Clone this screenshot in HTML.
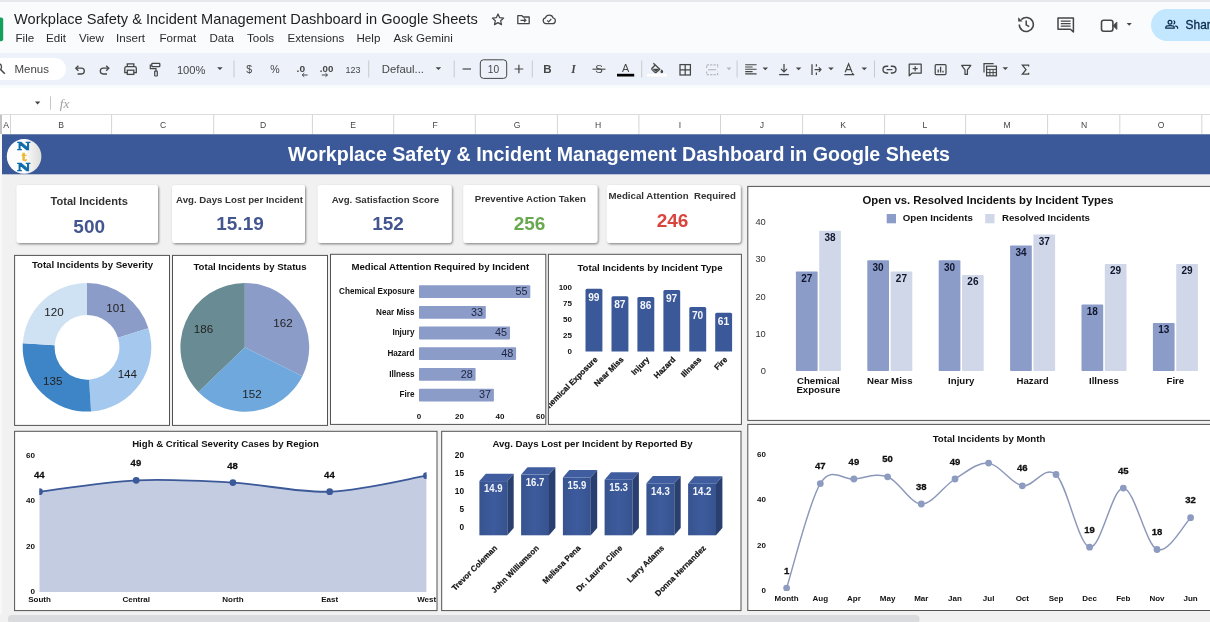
<!DOCTYPE html>
<html lang="en"><head><meta charset="utf-8"><title>Workplace Safety &amp; Incident Management Dashboard in Google Sheets</title>
<style>
html,body{margin:0;padding:0}
body{width:1210px;height:622px;overflow:hidden;position:relative;background:#f9fbfd;font-family:"Liberation Sans",Arial,sans-serif;color:#1f1f1f}
.abs{position:absolute}
#topline{left:0;top:0;width:1210px;height:1.5px;background:#e6e8ec}
#doctitle{left:14px;top:9px;font-size:14.6px;line-height:20px;white-space:nowrap;color:#1f1f1f}
#menubar span{position:absolute;top:30px;line-height:16px;font-size:11.6px;color:#2a2a2a;white-space:nowrap}
#toolbar{left:0;top:53px;width:1210px;height:32px;background:#edf1f9}
#menus{left:-12px;top:58px;width:78px;height:22px;border-radius:11px;background:#fff}
#menus span{position:absolute;left:26.5px;top:4px;font-size:11.5px;line-height:14px;color:#444}
#fbar{left:0;top:88px;width:1210px;height:26px;background:#fff}
#sheet{left:0;top:134px;width:1210px;height:488px;background:#f1f1f1}
#share{left:1150.7px;top:8.5px;width:80px;height:32px;border-radius:16px;background:#c2e7ff}
#share span{position:absolute;left:34.6px;top:9.2px;font-size:11.9px;line-height:14px;color:#0b2a4a;-webkit-text-stroke:0.3px #0b2a4a}
svg{position:absolute;left:0;top:0;will-change:transform}
#doctitle,#menubar,#menus,#share{will-change:transform}
svg text{font-family:"Liberation Sans",Arial,sans-serif}
</style></head>
<body>
<div id="topline" class="abs"></div>
<div id="doctitle" class="abs">Workplace Safety &amp; Incident Management Dashboard in Google Sheets</div>
<div id="menubar">
<span style="left:15.5px">File</span><span style="left:46px">Edit</span><span style="left:79px">View</span><span style="left:116px">Insert</span><span style="left:159.5px">Format</span><span style="left:209.5px">Data</span><span style="left:247px">Tools</span><span style="left:287.5px">Extensions</span><span style="left:356.5px">Help</span><span style="left:393.5px">Ask Gemini</span>
</div>
<div id="toolbar" class="abs"></div>
<div id="menus" class="abs"><span>Menus</span></div>
<div id="share" class="abs"><span>Share</span></div>
<div id="fbar" class="abs"></div>
<div id="sheet" class="abs"></div>
<svg id="chrome" width="1210" height="622" viewBox="0 0 1210 622">
<path d="M-6,17.4 H1.2 Q3.2,17.4 3.2,19.4 V39.2 Q3.2,41.2 1.2,41.2 H-6 Z" fill="#12a05c"/>
<path d="M498,14.6 L499.7,18.3 L503.6,18.7 L500.7,21.4 L501.5,25.2 L498,23.2 L494.5,25.2 L495.3,21.4 L492.4,18.7 L496.3,18.3 Z" fill="none" stroke="#444746" stroke-width="1.25" stroke-linejoin="round" transform="translate(0,-0.6)"/>
<path d="M517.8,15.7 H522 L523.3,17 H529.2 V23.6 H517.8 Z" fill="none" stroke="#444746" stroke-width="1.3" stroke-linejoin="round"/><path d="M520.5,20.3 H525.6 M524,18.4 L525.9,20.3 L524,22.2" fill="none" stroke="#444746" stroke-width="1.2"/>
<path d="M546,23.7 H552.6 A2.9,2.9 0 0 0 553.2,18 A4.1,4.1 0 0 0 545.4,17.9 A2.95,2.95 0 0 0 546,23.7 Z" fill="none" stroke="#444746" stroke-width="1.25"/><path d="M547.2,20.4 L548.6,21.8 L551.3,19" fill="none" stroke="#444746" stroke-width="1.2"/>
<path d="M1019.3,24.5 A7,7 0 1 0 1021.3,19.6" fill="none" stroke="#444746" stroke-width="1.6"/><path d="M1018.2,17.2 V21.6 H1022.6 Z" fill="#444746"/><path d="M1026.2,20.5 V24.8 L1029.2,26.6" fill="none" stroke="#444746" stroke-width="1.5"/>
<path d="M1058,18 H1073.4 V32 L1070.4,29.2 H1058 Z" fill="none" stroke="#444746" stroke-width="1.5" stroke-linejoin="round"/><path d="M1060.8,21.1 H1070.6 M1060.8,23.6 H1070.6 M1060.8,26.1 H1070.6" stroke="#444746" stroke-width="1.3"/>
<rect x="1101.5" y="20.2" width="11.4" height="11" rx="2.2" fill="none" stroke="#444746" stroke-width="1.6"/><path d="M1112.9,25.7 L1116.9,22 V29.4 Z" fill="#444746" stroke="#444746" stroke-width="0.8" stroke-linejoin="round"/>
<path d="M1126.6,22.9 h5.2 l-2.6,2.8 Z" fill="#444746"/>
<circle cx="1170" cy="22.3" r="1.9" fill="none" stroke="#0b2a4a" stroke-width="1.25"/><path d="M1165.8,28.2 V27.3 Q1165.8,25.6 1170,25.6 Q1174.2,25.6 1174.2,27.3 V28.2 Z" fill="none" stroke="#0b2a4a" stroke-width="1.25"/><path d="M1173.5,20.5 A1.9,1.9 0 0 1 1173.5,24.1 M1175.2,25.9 Q1177.6,26.3 1177.6,27.6 V28.8" fill="none" stroke="#0b2a4a" stroke-width="1.25"/>
<circle cx="-1.8" cy="66.9" r="3.3" fill="none" stroke="#444746" stroke-width="1.3"/><path d="M0.6,69.4 L4.8,73.8" stroke="#444746" stroke-width="1.5" fill="none"/>
<path d="M77.6,74 H81.4 A2.9,2.9 0 0 0 81.4,68.2 H76" fill="none" stroke="#444746" stroke-width="1.3"/><path d="M78.4,65.7 L75.8,68.2 L78.4,70.7" fill="none" stroke="#444746" stroke-width="1.3"/>
<path d="M107,74 H103.2 A2.9,2.9 0 0 1 103.2,68.2 H108.6" fill="none" stroke="#444746" stroke-width="1.3"/><path d="M106.2,65.7 L108.8,68.2 L106.2,70.7" fill="none" stroke="#444746" stroke-width="1.3"/>
<path d="M127.3,66.6 V63.9 H133.8 V66.6" fill="none" stroke="#444746" stroke-width="1.3"/><path d="M127.2,72.6 H124.8 V68.2 Q124.8,66.7 126.3,66.7 H134.8 Q136.3,66.7 136.3,68.2 V72.6 H133.9" fill="none" stroke="#444746" stroke-width="1.3"/><rect x="127.3" y="70.2" width="6.5" height="4.2" fill="none" stroke="#444746" stroke-width="1.3"/>
<rect x="151.8" y="63.4" width="8" height="3.2" rx="0.6" fill="none" stroke="#444746" stroke-width="1.3"/><path d="M151.8,65 H150.3 V68.6 H156 V71" fill="none" stroke="#444746" stroke-width="1.2"/><rect x="154.7" y="71.2" width="2.6" height="4.8" rx="0.5" fill="none" stroke="#444746" stroke-width="1.2"/>
<path d="M217.1,67.2 h5.6 l-2.8,2.8 Z" fill="#444746"/>
<rect x="233.5" y="60.5" width="1" height="17.0" fill="#c7cad1"/>
<path d="M302.2,75 H307.6 M304.2,73.2 L302.2,75 L304.2,76.8" fill="none" stroke="#444746" stroke-width="1"/>
<path d="M321.8,75 H327.4 M325.5,73.2 L327.5,75 L325.5,76.8" fill="none" stroke="#444746" stroke-width="1"/>
<rect x="368.2" y="60.5" width="1" height="17.0" fill="#c7cad1"/>
<path d="M435.6,67.2 h5.6 l-2.8,2.8 Z" fill="#444746"/>
<rect x="453.7" y="60.5" width="1" height="17.0" fill="#c7cad1"/>
<path d="M462.6,69 H471" stroke="#444746" stroke-width="1.2"/>
<rect x="480.3" y="59.8" width="26.4" height="18.6" rx="3.2" fill="none" stroke="#444746" stroke-width="1"/>
<path d="M514.6,69 H523.2 M518.9,64.7 V73.3" stroke="#444746" stroke-width="1.2"/>
<rect x="531.8" y="60.5" width="1" height="17.0" fill="#c7cad1"/>
<path d="M592.5,69.2 H605.5" stroke="#444746" stroke-width="1.1"/>
<rect x="617" y="73.8" width="17.2" height="2.7" fill="#000"/>
<rect x="641.2" y="60.5" width="1" height="17.0" fill="#c7cad1"/>
<path d="M653.4,63.2 L659.8,69.2 L656.3,72.4 Q655.6,72.9 654.9,72.4 L652,69.6 Q651.5,68.9 652,68.2 L655.2,65" fill="none" stroke="#444746" stroke-width="1.25" stroke-linejoin="round"/><path d="M652.4,68.8 H659.4 L656,72 Z" fill="#444746"/><path d="M661.8,69.2 Q663.2,71 663.2,71.8 A1.4,1.4 0 0 1 660.4,71.8 Q660.4,71 661.8,69.2 Z" fill="#444746"/>
<rect x="647" y="73.8" width="20" height="2.7" fill="#fff"/>
<rect x="680" y="64.6" width="10.4" height="10.4" fill="none" stroke="#444746" stroke-width="1.25"/><path d="M685.2,64.6 V75 M680,69.8 H690.4" stroke="#444746" stroke-width="1.25"/>
<path d="M706.6,68 V64.8 H717.6 V68 M706.6,71.4 V74.6 H717.6 V71.4" fill="none" stroke="#b4b7bd" stroke-width="1.2" stroke-dasharray="2.2 1.2"/><path d="M708,69.7 H716.2" stroke="#b4b7bd" stroke-width="1.1"/>
<path d="M726.5,67.6 h5 l-2.5,2.6 Z" fill="#b4b7bd"/>
<rect x="736.6" y="60.5" width="1" height="17.0" fill="#c7cad1"/>
<path d="M745.2,64.7 H756.6 M745.2,67 H752.6 M745.2,69.3 H756.6 M745.2,71.6 H752.6 M745.2,73.9 H756.6" stroke="#444746" stroke-width="1.1"/>
<path d="M762.5,67.5 h5.6 l-2.8,2.8 Z" fill="#444746"/>
<path d="M784,64 V71.6 M781,68.9 L784,71.9 L787,68.9" fill="none" stroke="#444746" stroke-width="1.25"/><path d="M779.2,74.6 H788.8" stroke="#444746" stroke-width="1.3"/>
<path d="M795.8,67.5 h5.6 l-2.8,2.8 Z" fill="#444746"/>
<path d="M812,64.2 V75 M816.4,64.2 V66.6 M816.4,72.6 V75" stroke="#444746" stroke-width="1.25"/><path d="M814.6,69.6 H820.8 M818.8,67.4 L821,69.6 L818.8,71.8" fill="none" stroke="#444746" stroke-width="1.2"/>
<path d="M828.2,67.5 h5.6 l-2.8,2.8 Z" fill="#444746"/>
<path d="M845.2,72.2 L848.6,63.8 L852,72.2 M846.4,69.6 H850.8" fill="none" stroke="#444746" stroke-width="1.2"/><path d="M844.4,74.6 H853.6 M852,73 L854.2,75.2" fill="none" stroke="#444746" stroke-width="1.1"/>
<path d="M861.5,67.5 h5.6 l-2.8,2.8 Z" fill="#444746"/>
<rect x="874.0" y="60.5" width="1" height="17.0" fill="#c7cad1"/>
<path d="M888.2,66.2 H886.4 A3.4,3.4 0 0 0 886.4,73 H888.2 M890.8,66.2 H892.6 A3.4,3.4 0 0 1 892.6,73 H890.8 M886.6,69.6 H892.4" fill="none" stroke="#444746" stroke-width="1.35"/>
<path d="M909.2,64.2 H921.2 V73.2 H912 L909.2,75.8 Z" fill="none" stroke="#444746" stroke-width="1.25" stroke-linejoin="round"/><path d="M915.2,66.2 V71.2 M912.7,68.7 H917.7" stroke="#444746" stroke-width="1.2"/>
<rect x="935.2" y="64.6" width="10.8" height="10" rx="1" fill="none" stroke="#444746" stroke-width="1.25"/><path d="M938.2,72.6 V69.4 M940.6,72.6 V66.8 M943,72.6 V70.8" stroke="#444746" stroke-width="1.3"/>
<path d="M961.6,65.4 H970.8 L967.4,69.9 V74.4 H965 V69.9 Z" fill="none" stroke="#444746" stroke-width="1.25" stroke-linejoin="round"/>
<path d="M984,72.4 V63.6 H993.6" fill="none" stroke="#444746" stroke-width="1.2"/><rect x="986.6" y="66.2" width="9.8" height="9.6" fill="none" stroke="#444746" stroke-width="1.25"/><path d="M986.6,69.4 H996.4 M986.6,72.6 H996.4 M989.9,69.4 V75.8 M993.1,69.4 V75.8" stroke="#444746" stroke-width="1"/>
<path d="M1002.5,67.2 h5.6 l-2.8,2.8 Z" fill="#444746"/>
<path d="M1028.6,66.6 V65.2 H1022.4 L1026,69.7 L1022.4,74.2 H1028.6 V72.8" fill="none" stroke="#444746" stroke-width="1.3" stroke-linejoin="miter"/>
<path d="M34.9,101.6 h5.4 l-2.7,2.8 Z" fill="#444"/>
<rect x="50" y="96.3" width="1" height="13.4" fill="#c7c7c7"/>
<text x="176.9" y="73.5" font-size="10.9" font-weight="400" fill="#444746" text-anchor="start" textLength="28.6" lengthAdjust="spacingAndGlyphs" >100%</text>
<text x="246.2" y="73.3" font-size="10.5" font-weight="400" fill="#444746" text-anchor="start" >$</text>
<text x="270.3" y="73.3" font-size="10.5" font-weight="400" fill="#444746" text-anchor="start" textLength="9.4" lengthAdjust="spacingAndGlyphs" >%</text>
<text x="296.6" y="72.0" font-size="9.5" font-weight="700" fill="#444746" text-anchor="start" textLength="8.5" lengthAdjust="spacingAndGlyphs" >.0</text>
<text x="319.8" y="72.0" font-size="9.5" font-weight="700" fill="#444746" text-anchor="start" textLength="13.5" lengthAdjust="spacingAndGlyphs" >.00</text>
<text x="345.4" y="73.0" font-size="9.3" font-weight="400" fill="#444746" text-anchor="start" textLength="15" lengthAdjust="spacingAndGlyphs" >123</text>
<text x="381.8" y="72.5" font-size="10.9" font-weight="400" fill="#444746" text-anchor="start" textLength="42.2" lengthAdjust="spacingAndGlyphs" >Defaul...</text>
<text x="493.4" y="73.0" font-size="10.8" font-weight="400" fill="#444746" text-anchor="middle" textLength="11.3" lengthAdjust="spacingAndGlyphs" >10</text>
<text x="547.4" y="73.4" font-size="11.5" font-weight="700" fill="#444746" text-anchor="middle" >B</text>
<text x="573.4" y="73.4" font-size="11.5" font-weight="400" fill="#444746" text-anchor="middle" font-style="italic" style="font-family:'Liberation Serif',serif;font-weight:700">I</text>
<text x="599.0" y="73.4" font-size="11.3" font-weight="400" fill="#444746" text-anchor="middle" >S</text>
<text x="625.6" y="72.0" font-size="10.8" font-weight="400" fill="#444746" text-anchor="middle" >A</text>
<text x="59.8" y="107.6" font-size="13" font-weight="400" fill="#9aa0a6" text-anchor="start" font-style="italic" style="font-family:'Liberation Serif',serif">fx</text>
<rect x="0" y="114" width="1210" height="20" fill="#fff"/>
<rect x="0" y="114" width="1210" height="1" fill="#dcdcdc"/>
<rect x="0" y="115" width="2" height="19" fill="#c4c4c4"/>
<rect x="10.0" y="115" width="1" height="19" fill="#d4d4d4"/>
<rect x="111.1" y="115" width="1" height="19" fill="#d4d4d4"/>
<rect x="213.2" y="115" width="1" height="19" fill="#d4d4d4"/>
<rect x="311.9" y="115" width="1" height="19" fill="#d4d4d4"/>
<rect x="393.2" y="115" width="1" height="19" fill="#d4d4d4"/>
<rect x="474.8" y="115" width="1" height="19" fill="#d4d4d4"/>
<rect x="556.9" y="115" width="1" height="19" fill="#d4d4d4"/>
<rect x="638.4" y="115" width="1" height="19" fill="#d4d4d4"/>
<rect x="720.0" y="115" width="1" height="19" fill="#d4d4d4"/>
<rect x="802.1" y="115" width="1" height="19" fill="#d4d4d4"/>
<rect x="884.1" y="115" width="1" height="19" fill="#d4d4d4"/>
<rect x="965.1" y="115" width="1" height="19" fill="#d4d4d4"/>
<rect x="1047.1" y="115" width="1" height="19" fill="#d4d4d4"/>
<rect x="1119.3" y="115" width="1" height="19" fill="#d4d4d4"/>
<rect x="1201.3" y="115" width="1" height="19" fill="#d4d4d4"/>
<text x="6.0" y="128.0" font-size="8.6" font-weight="400" fill="#444" text-anchor="middle" >A</text>
<text x="61.0" y="128.0" font-size="8.6" font-weight="400" fill="#444" text-anchor="middle" >B</text>
<text x="163.0" y="128.0" font-size="8.6" font-weight="400" fill="#444" text-anchor="middle" >C</text>
<text x="263.0" y="128.0" font-size="8.6" font-weight="400" fill="#444" text-anchor="middle" >D</text>
<text x="353.0" y="128.0" font-size="8.6" font-weight="400" fill="#444" text-anchor="middle" >E</text>
<text x="435.0" y="128.0" font-size="8.6" font-weight="400" fill="#444" text-anchor="middle" >F</text>
<text x="517.0" y="128.0" font-size="8.6" font-weight="400" fill="#444" text-anchor="middle" >G</text>
<text x="598.0" y="128.0" font-size="8.6" font-weight="400" fill="#444" text-anchor="middle" >H</text>
<text x="680.0" y="128.0" font-size="8.6" font-weight="400" fill="#444" text-anchor="middle" >I</text>
<text x="762.0" y="128.0" font-size="8.6" font-weight="400" fill="#444" text-anchor="middle" >J</text>
<text x="843.0" y="128.0" font-size="8.6" font-weight="400" fill="#444" text-anchor="middle" >K</text>
<text x="925.0" y="128.0" font-size="8.6" font-weight="400" fill="#444" text-anchor="middle" >L</text>
<text x="1007.0" y="128.0" font-size="8.6" font-weight="400" fill="#444" text-anchor="middle" >M</text>
<text x="1084.0" y="128.0" font-size="8.6" font-weight="400" fill="#444" text-anchor="middle" >N</text>
<text x="1161.0" y="128.0" font-size="8.6" font-weight="400" fill="#444" text-anchor="middle" >O</text>
</svg>
<svg id="dash" width="1210" height="622" viewBox="0 0 1210 622">
<rect x="2" y="134.3" width="1208" height="40" fill="#3b5998"/>
<text x="288.0" y="161.0" font-size="19.6" font-weight="700" fill="#fff" text-anchor="start" textLength="662" lengthAdjust="spacingAndGlyphs" >Workplace Safety &amp; Incident Management Dashboard in Google Sheets</text>
<defs><linearGradient id="lg" x1="0" x2="1"><stop offset="0.5" stop-color="#fdfdfe"/><stop offset="1" stop-color="#dcdcd8"/></linearGradient></defs>
<circle cx="24.1" cy="156.4" r="17.3" fill="url(#lg)"/>
<text x="23.8" y="150.3" style="font-family:'DejaVu Serif',serif" font-size="11" font-weight="700" fill="#0d6dab" stroke="#0d6dab" stroke-width="0.7" text-anchor="middle" textLength="13.6" lengthAdjust="spacingAndGlyphs">N</text>
<text x="24.2" y="160.6" style="font-family:'DejaVu Serif',serif" font-size="10.5" font-weight="700" fill="#ecb92e" stroke="#ecb92e" stroke-width="0.6" text-anchor="middle">t</text>
<text x="23.8" y="170.6" style="font-family:'DejaVu Serif',serif" font-size="11" font-weight="700" fill="#0d6dab" stroke="#0d6dab" stroke-width="0.7" text-anchor="middle" textLength="13.6" lengthAdjust="spacingAndGlyphs">N</text>
<defs><filter id="sh" x="-5%" y="-10%" width="112%" height="125%"><feDropShadow dx="1" dy="1.2" stdDeviation="0.9" flood-color="#000" flood-opacity="0.45"/></filter></defs>
<rect x="16.5" y="185" width="141.5" height="58" rx="3" fill="#fff" filter="url(#sh)"/>
<text x="89.2" y="204.7" font-size="11.07" font-weight="700" fill="#333" text-anchor="middle" xml:space="preserve">Total Incidents</text>
<text x="89.2" y="232.5" font-size="19" font-weight="700" fill="#44568f" text-anchor="middle" >500</text>
<rect x="172" y="185" width="133" height="58" rx="3" fill="#fff" filter="url(#sh)"/>
<text x="239.5" y="202.7" font-size="9.67" font-weight="700" fill="#333" text-anchor="middle" xml:space="preserve">Avg. Days Lost per Incident</text>
<text x="240.0" y="230.3" font-size="19" font-weight="700" fill="#44568f" text-anchor="middle" >15.19</text>
<rect x="317.7" y="185" width="134.0" height="58" rx="3" fill="#fff" filter="url(#sh)"/>
<text x="385.4" y="202.9" font-size="9.67" font-weight="700" fill="#333" text-anchor="middle" xml:space="preserve">Avg. Satisfaction Score</text>
<text x="388.0" y="230.4" font-size="19" font-weight="700" fill="#44568f" text-anchor="middle" >152</text>
<rect x="463.2" y="185" width="134.2" height="58" rx="3" fill="#fff" filter="url(#sh)"/>
<text x="530.3" y="202.3" font-size="9.67" font-weight="700" fill="#333" text-anchor="middle" xml:space="preserve">Preventive Action Taken</text>
<text x="529.5" y="230.4" font-size="19" font-weight="700" fill="#6aa84f" text-anchor="middle" >256</text>
<rect x="606.8" y="185" width="133.9000000000001" height="58" rx="3" fill="#fff" filter="url(#sh)"/>
<text x="672.2" y="198.7" font-size="9.67" font-weight="700" fill="#333" text-anchor="middle" xml:space="preserve">Medical Attention  Required</text>
<text x="672.5" y="226.7" font-size="19" font-weight="700" fill="#d9453d" text-anchor="middle" >246</text>
<rect x="14.6" y="255.4" width="154.9" height="169.99999999999997" fill="#fff" stroke="#525252" stroke-width="1"/>
<text x="92.5" y="268.3" font-size="9.65" font-weight="700" fill="#111" text-anchor="middle" >Total Incidents by Severity</text>
<path d="M87.00,283.00 A64.3,64.3 0 0 1 148.40,328.20 L117.94,337.68 A32.4,32.4 0 0 0 87.00,314.90 Z" fill="#8c9cc9"/>
<path d="M148.40,328.20 A64.3,64.3 0 0 1 91.04,411.47 L89.03,379.64 A32.4,32.4 0 0 0 117.94,337.68 Z" fill="#a4c8ee"/>
<path d="M91.04,411.47 A64.3,64.3 0 0 1 22.83,343.26 L54.66,345.27 A32.4,32.4 0 0 0 89.03,379.64 Z" fill="#3d85c6"/>
<path d="M22.83,343.26 A64.3,64.3 0 0 1 87.00,283.00 L87.00,314.90 A32.4,32.4 0 0 0 54.66,345.27 Z" fill="#cfe2f3"/>
<text x="116.0" y="312.2" font-size="11.6" font-weight="400" fill="#222" text-anchor="middle" >101</text>
<text x="127.3" y="378.2" font-size="11.6" font-weight="400" fill="#222" text-anchor="middle" >144</text>
<text x="52.7" y="385.2" font-size="11.6" font-weight="400" fill="#222" text-anchor="middle" >135</text>
<text x="54.0" y="316.2" font-size="11.6" font-weight="400" fill="#222" text-anchor="middle" >120</text>
<rect x="172.5" y="255.4" width="155.0" height="169.99999999999997" fill="#fff" stroke="#525252" stroke-width="1"/>
<text x="250.0" y="270.4" font-size="9.65" font-weight="700" fill="#111" text-anchor="middle" >Total Incidents by Status</text>
<path d="M244.8,347.3 L244.80,282.90 A64.4,64.4 0 0 1 302.36,376.18 Z" fill="#8c9cc9"/>
<path d="M244.8,347.3 L302.36,376.18 A64.4,64.4 0 0 1 198.41,391.97 Z" fill="#6fa8dc"/>
<path d="M244.8,347.3 L198.41,391.97 A64.4,64.4 0 0 1 244.80,282.90 Z" fill="#698b94"/>
<text x="283.0" y="327.2" font-size="11.6" font-weight="400" fill="#222" text-anchor="middle" >162</text>
<text x="252.0" y="398.2" font-size="11.6" font-weight="400" fill="#222" text-anchor="middle" >152</text>
<text x="203.5" y="332.9" font-size="11.6" font-weight="400" fill="#222" text-anchor="middle" >186</text>
<rect x="330.5" y="254.3" width="215.29999999999995" height="170.09999999999997" fill="#fff" stroke="#525252" stroke-width="1"/>
<clipPath id="c3"><rect x="331" y="255" width="214.3" height="169"/></clipPath><g clip-path="url(#c3)">
<text x="440.3" y="270.0" font-size="9.65" font-weight="700" fill="#111" text-anchor="middle" >Medical Attention Required by Incident</text>
<rect x="419" y="285.2" width="111.3" height="12.8" rx="0.8" fill="#8c9cc9"/>
<text x="414.5" y="293.8" font-size="8.15" font-weight="700" fill="#111" text-anchor="end" >Chemical Exposure</text>
<text x="527.4" y="294.8" font-size="10.8" font-weight="400" fill="#1c2340" text-anchor="end" >55</text>
<rect x="419" y="305.9" width="66.8" height="12.8" rx="0.8" fill="#8c9cc9"/>
<text x="414.5" y="314.5" font-size="8.15" font-weight="700" fill="#111" text-anchor="end" >Near Miss</text>
<text x="482.9" y="315.5" font-size="10.8" font-weight="400" fill="#1c2340" text-anchor="end" >33</text>
<rect x="419" y="326.6" width="91.0" height="12.8" rx="0.8" fill="#8c9cc9"/>
<text x="414.5" y="335.2" font-size="8.15" font-weight="700" fill="#111" text-anchor="end" >Injury</text>
<text x="507.1" y="336.2" font-size="10.8" font-weight="400" fill="#1c2340" text-anchor="end" >45</text>
<rect x="419" y="347.3" width="97.1" height="12.8" rx="0.8" fill="#8c9cc9"/>
<text x="414.5" y="355.9" font-size="8.15" font-weight="700" fill="#111" text-anchor="end" >Hazard</text>
<text x="513.2" y="356.9" font-size="10.8" font-weight="400" fill="#1c2340" text-anchor="end" >48</text>
<rect x="419" y="368.0" width="56.6" height="12.8" rx="0.8" fill="#8c9cc9"/>
<text x="414.5" y="376.6" font-size="8.15" font-weight="700" fill="#111" text-anchor="end" >Illness</text>
<text x="472.7" y="377.6" font-size="10.8" font-weight="400" fill="#1c2340" text-anchor="end" >28</text>
<rect x="419" y="388.7" width="74.9" height="12.8" rx="0.8" fill="#8c9cc9"/>
<text x="414.5" y="397.3" font-size="8.15" font-weight="700" fill="#111" text-anchor="end" >Fire</text>
<text x="491.0" y="398.3" font-size="10.8" font-weight="400" fill="#1c2340" text-anchor="end" >37</text>
<text x="419.0" y="419.4" font-size="8" font-weight="700" fill="#111" text-anchor="middle" >0</text>
<text x="459.5" y="419.4" font-size="8" font-weight="700" fill="#111" text-anchor="middle" >20</text>
<text x="499.9" y="419.4" font-size="8" font-weight="700" fill="#111" text-anchor="middle" >40</text>
<text x="540.4" y="419.4" font-size="8" font-weight="700" fill="#111" text-anchor="middle" >60</text>
</g>
<rect x="548.4" y="254.3" width="193.0" height="170.09999999999997" fill="#fff" stroke="#525252" stroke-width="1"/>
<clipPath id="c4"><rect x="549" y="255" width="192" height="168.5"/></clipPath><g clip-path="url(#c4)">
<text x="650.0" y="271.0" font-size="9.65" font-weight="700" fill="#111" text-anchor="middle" >Total Incidents by Incident Type</text>
<text x="572.0" y="353.5" font-size="8" font-weight="700" fill="#111" text-anchor="end" >0</text>
<text x="572.0" y="337.7" font-size="8" font-weight="700" fill="#111" text-anchor="end" >25</text>
<text x="572.0" y="321.9" font-size="8" font-weight="700" fill="#111" text-anchor="end" >50</text>
<text x="572.0" y="306.0" font-size="8" font-weight="700" fill="#111" text-anchor="end" >75</text>
<text x="572.0" y="290.2" font-size="8" font-weight="700" fill="#111" text-anchor="end" >100</text>
<path d="M585.5,351.4 V290.2 Q585.5,288.7 587.0,288.7 H600.9 Q602.4,288.7 602.4,290.2 V351.4 Z" fill="#3b5998"/>
<text x="593.8" y="300.8" font-size="10.2" font-weight="700" fill="#f4f6fb" text-anchor="middle" >99</text>
<text transform="translate(598.1,360.0) rotate(-45)" stroke="#111" stroke-width="0.22" font-size="8.05" font-weight="700" fill="#111" text-anchor="end">Chemical Exposure</text>
<path d="M611.5,351.4 V297.8 Q611.5,296.3 613.0,296.3 H626.9 Q628.4,296.3 628.4,297.8 V351.4 Z" fill="#3b5998"/>
<text x="619.8" y="308.4" font-size="10.2" font-weight="700" fill="#f4f6fb" text-anchor="middle" >87</text>
<text transform="translate(624.1,360.0) rotate(-45)" stroke="#111" stroke-width="0.22" font-size="8.05" font-weight="700" fill="#111" text-anchor="end">Near Miss</text>
<path d="M637.4,351.4 V298.5 Q637.4,297.0 638.9,297.0 H652.8 Q654.3,297.0 654.3,298.5 V351.4 Z" fill="#3b5998"/>
<text x="645.7" y="309.1" font-size="10.2" font-weight="700" fill="#f4f6fb" text-anchor="middle" >86</text>
<text transform="translate(650.0,360.0) rotate(-45)" stroke="#111" stroke-width="0.22" font-size="8.05" font-weight="700" fill="#111" text-anchor="end">Injury</text>
<path d="M663.4,351.4 V291.5 Q663.4,290.0 664.9,290.0 H678.8 Q680.2,290.0 680.2,291.5 V351.4 Z" fill="#3b5998"/>
<text x="671.6" y="302.1" font-size="10.2" font-weight="700" fill="#f4f6fb" text-anchor="middle" >97</text>
<text transform="translate(676.0,360.0) rotate(-45)" stroke="#111" stroke-width="0.22" font-size="8.05" font-weight="700" fill="#111" text-anchor="end">Hazard</text>
<path d="M689.3,351.4 V308.6 Q689.3,307.1 690.8,307.1 H704.7 Q706.2,307.1 706.2,308.6 V351.4 Z" fill="#3b5998"/>
<text x="697.6" y="319.2" font-size="10.2" font-weight="700" fill="#f4f6fb" text-anchor="middle" >70</text>
<text transform="translate(701.9,360.0) rotate(-45)" stroke="#111" stroke-width="0.22" font-size="8.05" font-weight="700" fill="#111" text-anchor="end">Illness</text>
<path d="M715.2,351.4 V314.3 Q715.2,312.8 716.8,312.8 H730.6 Q732.1,312.8 732.1,314.3 V351.4 Z" fill="#3b5998"/>
<text x="723.5" y="324.9" font-size="10.2" font-weight="700" fill="#f4f6fb" text-anchor="middle" >61</text>
<text transform="translate(727.9,360.0) rotate(-45)" stroke="#111" stroke-width="0.22" font-size="8.05" font-weight="700" fill="#111" text-anchor="end">Fire</text>
</g>
<rect x="747.8" y="186.4" width="467.20000000000005" height="233.99999999999997" fill="#fff" stroke="#525252" stroke-width="1"/>
<text x="988.0" y="204.0" font-size="11.27" font-weight="700" fill="#111" text-anchor="middle" >Open vs. Resolved Incidents by Incident Types</text>
<rect x="886.7" y="214" width="9.3" height="9.3" fill="#8c9cc9"/>
<text x="902.8" y="221.1" font-size="9.0" font-weight="700" fill="#111" text-anchor="start" textLength="70" lengthAdjust="spacingAndGlyphs" >Open Incidents</text>
<rect x="985.2" y="214" width="9.3" height="9.3" fill="#d0d7e9"/>
<text x="1002.0" y="221.1" font-size="9.0" font-weight="700" fill="#111" text-anchor="start" textLength="88" lengthAdjust="spacingAndGlyphs" >Resolved Incidents</text>
<text x="765.8" y="374.3" font-size="9.3" font-weight="400" fill="#333" text-anchor="end" >0</text>
<text x="765.8" y="337.0" font-size="9.3" font-weight="400" fill="#333" text-anchor="end" >10</text>
<text x="765.8" y="299.7" font-size="9.3" font-weight="400" fill="#333" text-anchor="end" >20</text>
<text x="765.8" y="262.4" font-size="9.3" font-weight="400" fill="#333" text-anchor="end" >30</text>
<text x="765.8" y="225.1" font-size="9.3" font-weight="400" fill="#333" text-anchor="end" >40</text>
<rect x="795.9" y="271.4" width="21.7" height="99.6" rx="0.8" fill="#8c9cc9"/>
<text x="806.8" y="281.7" font-size="10" font-weight="700" fill="#10162e" text-anchor="middle" >27</text>
<rect x="819.2" y="230.8" width="21.7" height="140.2" rx="0.8" fill="#d0d7e9"/>
<text x="830.0" y="241.1" font-size="10" font-weight="700" fill="#10162e" text-anchor="middle" >38</text>
<text x="818.4" y="383.9" font-size="9.65" font-weight="700" fill="#111" text-anchor="middle" >Chemical</text>
<text x="818.4" y="393.2" font-size="9.65" font-weight="700" fill="#111" text-anchor="middle" >Exposure</text>
<rect x="867.3" y="260.3" width="21.7" height="110.7" rx="0.8" fill="#8c9cc9"/>
<text x="878.1" y="270.6" font-size="10" font-weight="700" fill="#10162e" text-anchor="middle" >30</text>
<rect x="890.6" y="271.4" width="21.7" height="99.6" rx="0.8" fill="#d0d7e9"/>
<text x="901.4" y="281.7" font-size="10" font-weight="700" fill="#10162e" text-anchor="middle" >27</text>
<text x="889.8" y="383.9" font-size="9.65" font-weight="700" fill="#111" text-anchor="middle" >Near Miss</text>
<rect x="938.7" y="260.3" width="21.7" height="110.7" rx="0.8" fill="#8c9cc9"/>
<text x="949.6" y="270.6" font-size="10" font-weight="700" fill="#10162e" text-anchor="middle" >30</text>
<rect x="962.0" y="275.1" width="21.7" height="95.9" rx="0.8" fill="#d0d7e9"/>
<text x="972.9" y="285.4" font-size="10" font-weight="700" fill="#10162e" text-anchor="middle" >26</text>
<text x="961.2" y="383.9" font-size="9.65" font-weight="700" fill="#111" text-anchor="middle" >Injury</text>
<rect x="1010.1" y="245.5" width="21.7" height="125.5" rx="0.8" fill="#8c9cc9"/>
<text x="1021.0" y="255.8" font-size="10" font-weight="700" fill="#10162e" text-anchor="middle" >34</text>
<rect x="1033.4" y="234.5" width="21.7" height="136.5" rx="0.8" fill="#d0d7e9"/>
<text x="1044.2" y="244.8" font-size="10" font-weight="700" fill="#10162e" text-anchor="middle" >37</text>
<text x="1032.6" y="383.9" font-size="9.65" font-weight="700" fill="#111" text-anchor="middle" >Hazard</text>
<rect x="1081.5" y="304.6" width="21.7" height="66.4" rx="0.8" fill="#8c9cc9"/>
<text x="1092.3" y="314.9" font-size="10" font-weight="700" fill="#10162e" text-anchor="middle" >18</text>
<rect x="1104.8" y="264.0" width="21.7" height="107.0" rx="0.8" fill="#d0d7e9"/>
<text x="1115.6" y="274.3" font-size="10" font-weight="700" fill="#10162e" text-anchor="middle" >29</text>
<text x="1104.0" y="383.9" font-size="9.65" font-weight="700" fill="#111" text-anchor="middle" >Illness</text>
<rect x="1152.9" y="323.0" width="21.7" height="48.0" rx="0.8" fill="#8c9cc9"/>
<text x="1163.8" y="333.3" font-size="10" font-weight="700" fill="#10162e" text-anchor="middle" >13</text>
<rect x="1176.2" y="264.0" width="21.7" height="107.0" rx="0.8" fill="#d0d7e9"/>
<text x="1187.0" y="274.3" font-size="10" font-weight="700" fill="#10162e" text-anchor="middle" >29</text>
<text x="1175.4" y="383.9" font-size="9.65" font-weight="700" fill="#111" text-anchor="middle" >Fire</text>
<rect x="14.6" y="431.3" width="422.4" height="179.3" fill="#fff" stroke="#525252" stroke-width="1"/>
<clipPath id="c6"><rect x="15" y="432" width="421.5" height="178"/></clipPath><g clip-path="url(#c6)">
<text x="225.5" y="446.8" font-size="9.65" font-weight="700" fill="#111" text-anchor="middle" >High &amp; Critical Severity Cases by Region</text>
<path d="M39.5,491.7 C55.6,489.8 104.0,481.8 136.2,480.3 C168.5,478.8 200.7,480.7 232.9,482.6 C265.2,484.5 297.4,492.8 329.7,491.7 C361.9,490.5 410.3,478.4 426.4,475.7 L426.4,592.0 L39.5,592.0 Z" fill="#c4cce1"/>
<path d="M39.5,491.7 C55.6,489.8 104.0,481.8 136.2,480.3 C168.5,478.8 200.7,480.7 232.9,482.6 C265.2,484.5 297.4,492.8 329.7,491.7 C361.9,490.5 410.3,478.4 426.4,475.7" fill="none" stroke="#3b5998" stroke-width="1.8"/>
<clipPath id="c6p"><rect x="39.3" y="440" width="387.3" height="160"/></clipPath>
<circle cx="39.5" cy="491.7" r="3.4" fill="#3b5998" clip-path="url(#c6p)"/>
<text x="39.2" y="477.6" font-size="9.7" font-weight="700" fill="#111" text-anchor="middle" textLength="10.6" lengthAdjust="spacingAndGlyphs" stroke="#111" stroke-width="0.3">44</text>
<text x="39.5" y="602.2" font-size="8" font-weight="700" fill="#111" text-anchor="middle" >South</text>
<circle cx="136.2" cy="480.3" r="3.4" fill="#3b5998" clip-path="url(#c6p)"/>
<text x="135.9" y="466.2" font-size="9.7" font-weight="700" fill="#111" text-anchor="middle" textLength="10.6" lengthAdjust="spacingAndGlyphs" stroke="#111" stroke-width="0.3">49</text>
<text x="136.2" y="602.2" font-size="8" font-weight="700" fill="#111" text-anchor="middle" >Central</text>
<circle cx="232.9" cy="482.6" r="3.4" fill="#3b5998" clip-path="url(#c6p)"/>
<text x="232.6" y="468.5" font-size="9.7" font-weight="700" fill="#111" text-anchor="middle" textLength="10.6" lengthAdjust="spacingAndGlyphs" stroke="#111" stroke-width="0.3">48</text>
<text x="232.9" y="602.2" font-size="8" font-weight="700" fill="#111" text-anchor="middle" >North</text>
<circle cx="329.7" cy="491.7" r="3.4" fill="#3b5998" clip-path="url(#c6p)"/>
<text x="329.4" y="477.6" font-size="9.7" font-weight="700" fill="#111" text-anchor="middle" textLength="10.6" lengthAdjust="spacingAndGlyphs" stroke="#111" stroke-width="0.3">44</text>
<text x="329.7" y="602.2" font-size="8" font-weight="700" fill="#111" text-anchor="middle" >East</text>
<circle cx="426.4" cy="475.7" r="3.4" fill="#3b5998" clip-path="url(#c6p)"/>
<text x="417.2" y="602.2" font-size="8" font-weight="700" fill="#111" text-anchor="start" >West</text>
<text x="35.0" y="594.4" font-size="8.1" font-weight="700" fill="#111" text-anchor="end" >0</text>
<text x="35.0" y="548.8" font-size="8.1" font-weight="700" fill="#111" text-anchor="end" >20</text>
<text x="35.0" y="503.2" font-size="8.1" font-weight="700" fill="#111" text-anchor="end" >40</text>
<text x="35.0" y="457.6" font-size="8.1" font-weight="700" fill="#111" text-anchor="end" >60</text>
</g>
<rect x="441.7" y="431.3" width="299.3" height="179.3" fill="#fff" stroke="#525252" stroke-width="1"/>
<text x="592.5" y="446.5" font-size="9.65" font-weight="700" fill="#111" text-anchor="middle" >Avg. Days Lost per Incident by Reported By</text>
<defs><linearGradient id="bf" x1="0" x2="1"><stop offset="0" stop-color="#37538f"/><stop offset="0.5" stop-color="#3d5b9d"/><stop offset="1" stop-color="#37538f"/></linearGradient></defs>
<text x="464.0" y="530.3" font-size="8.3" font-weight="700" fill="#111" text-anchor="end" >0</text>
<text x="464.0" y="512.2" font-size="8.3" font-weight="700" fill="#111" text-anchor="end" >5</text>
<text x="464.0" y="494.1" font-size="8.3" font-weight="700" fill="#111" text-anchor="end" >10</text>
<text x="464.0" y="476.0" font-size="8.3" font-weight="700" fill="#111" text-anchor="end" >15</text>
<text x="464.0" y="457.9" font-size="8.3" font-weight="700" fill="#111" text-anchor="end" >20</text>
<rect x="479.4" y="481.1" width="27.9" height="54.2" fill="url(#bf)"/>
<path d="M479.4,481.1 l6.4,-7.4 h27.9 l-6.4,7.4 Z" fill="#405e9f"/>
<path d="M507.3,481.1 l6.4,-7.4 V527.9 l-6.4,7.4 Z" fill="#283f70"/>
<text x="493.3" y="492.4" font-size="10.2" font-weight="700" fill="#f4f6fb" text-anchor="middle" textLength="18.6" lengthAdjust="spacingAndGlyphs" >14.9</text>
<text transform="translate(497.7,548.6) rotate(-45)" stroke="#111" stroke-width="0.22" font-size="8.0" font-weight="700" fill="#111" text-anchor="end">Trevor Coleman</text>
<rect x="521.1" y="474.6" width="27.9" height="60.7" fill="url(#bf)"/>
<path d="M521.1,474.6 l6.4,-7.4 h27.9 l-6.4,7.4 Z" fill="#405e9f"/>
<path d="M549.0,474.6 l6.4,-7.4 V527.9 l-6.4,7.4 Z" fill="#283f70"/>
<text x="535.1" y="485.9" font-size="10.2" font-weight="700" fill="#f4f6fb" text-anchor="middle" textLength="18.6" lengthAdjust="spacingAndGlyphs" >16.7</text>
<text transform="translate(539.4,548.6) rotate(-45)" stroke="#111" stroke-width="0.22" font-size="8.0" font-weight="700" fill="#111" text-anchor="end">John Williamson</text>
<rect x="562.9" y="477.5" width="27.9" height="57.8" fill="url(#bf)"/>
<path d="M562.9,477.5 l6.4,-7.4 h27.9 l-6.4,7.4 Z" fill="#405e9f"/>
<path d="M590.8,477.5 l6.4,-7.4 V527.9 l-6.4,7.4 Z" fill="#283f70"/>
<text x="576.9" y="488.8" font-size="10.2" font-weight="700" fill="#f4f6fb" text-anchor="middle" textLength="18.6" lengthAdjust="spacingAndGlyphs" >15.9</text>
<text transform="translate(581.2,548.6) rotate(-45)" stroke="#111" stroke-width="0.22" font-size="8.0" font-weight="700" fill="#111" text-anchor="end">Melissa Pena</text>
<rect x="604.6" y="479.7" width="27.9" height="55.6" fill="url(#bf)"/>
<path d="M604.6,479.7 l6.4,-7.4 h27.9 l-6.4,7.4 Z" fill="#405e9f"/>
<path d="M632.5,479.7 l6.4,-7.4 V527.9 l-6.4,7.4 Z" fill="#283f70"/>
<text x="618.6" y="491.0" font-size="10.2" font-weight="700" fill="#f4f6fb" text-anchor="middle" textLength="18.6" lengthAdjust="spacingAndGlyphs" >15.3</text>
<text transform="translate(622.9,548.6) rotate(-45)" stroke="#111" stroke-width="0.22" font-size="8.0" font-weight="700" fill="#111" text-anchor="end">Dr. Lauren Cline</text>
<rect x="646.4" y="483.3" width="27.9" height="52.0" fill="url(#bf)"/>
<path d="M646.4,483.3 l6.4,-7.4 h27.9 l-6.4,7.4 Z" fill="#405e9f"/>
<path d="M674.3,483.3 l6.4,-7.4 V527.9 l-6.4,7.4 Z" fill="#283f70"/>
<text x="660.4" y="494.6" font-size="10.2" font-weight="700" fill="#f4f6fb" text-anchor="middle" textLength="18.6" lengthAdjust="spacingAndGlyphs" >14.3</text>
<text transform="translate(664.7,548.6) rotate(-45)" stroke="#111" stroke-width="0.22" font-size="8.0" font-weight="700" fill="#111" text-anchor="end">Larry Adams</text>
<rect x="688.1" y="483.7" width="27.9" height="51.6" fill="url(#bf)"/>
<path d="M688.1,483.7 l6.4,-7.4 h27.9 l-6.4,7.4 Z" fill="#405e9f"/>
<path d="M716.0,483.7 l6.4,-7.4 V527.9 l-6.4,7.4 Z" fill="#283f70"/>
<text x="702.1" y="495.0" font-size="10.2" font-weight="700" fill="#f4f6fb" text-anchor="middle" textLength="18.6" lengthAdjust="spacingAndGlyphs" >14.2</text>
<text transform="translate(706.4,548.6) rotate(-45)" stroke="#111" stroke-width="0.22" font-size="8.0" font-weight="700" fill="#111" text-anchor="end">Donna Hernandez</text>
<rect x="747.8" y="424.4" width="467.20000000000005" height="186.10000000000002" fill="#fff" stroke="#525252" stroke-width="1"/>
<text x="989.0" y="442.1" font-size="9.65" font-weight="700" fill="#111" text-anchor="middle" >Total Incidents by Month</text>
<path d="M786.6,588.1 C792.2,570.7 809.0,501.8 820.3,483.6 C831.5,465.4 842.7,480.2 853.9,479.0 C865.2,477.9 876.4,472.6 887.6,476.8 C898.8,480.9 910.1,503.6 921.3,504.0 C932.5,504.4 943.7,485.8 955.0,479.0 C966.2,472.2 977.4,462.0 988.6,463.1 C999.8,464.2 1011.1,483.9 1022.3,485.8 C1033.5,487.7 1044.7,464.2 1056.0,474.5 C1067.2,484.7 1078.4,544.9 1089.6,547.2 C1100.9,549.5 1112.1,487.7 1123.3,488.1 C1134.5,488.5 1145.7,544.6 1157.0,549.5 C1168.2,554.4 1185.0,523.0 1190.6,517.7" fill="none" stroke="#8c98ba" stroke-width="1.45"/>
<clipPath id="c8p"><rect x="780" y="440" width="430" height="151"/></clipPath>
<circle cx="786.6" cy="588.1" r="3.4" fill="#8d9bc0" clip-path="url(#c8p)"/>
<text x="786.6" y="573.7" font-size="9.7" font-weight="700" fill="#111" text-anchor="middle" stroke="#111" stroke-width="0.3">1</text>
<text x="786.6" y="601.3" font-size="8" font-weight="700" fill="#111" text-anchor="middle" >Month</text>
<circle cx="820.3" cy="483.6" r="3.4" fill="#8d9bc0" clip-path="url(#c8p)"/>
<text x="820.3" y="469.2" font-size="9.7" font-weight="700" fill="#111" text-anchor="middle" textLength="10.6" lengthAdjust="spacingAndGlyphs" stroke="#111" stroke-width="0.3">47</text>
<text x="820.3" y="601.3" font-size="8" font-weight="700" fill="#111" text-anchor="middle" >Aug</text>
<circle cx="853.9" cy="479.0" r="3.4" fill="#8d9bc0" clip-path="url(#c8p)"/>
<text x="853.9" y="464.6" font-size="9.7" font-weight="700" fill="#111" text-anchor="middle" textLength="10.6" lengthAdjust="spacingAndGlyphs" stroke="#111" stroke-width="0.3">49</text>
<text x="853.9" y="601.3" font-size="8" font-weight="700" fill="#111" text-anchor="middle" >Apr</text>
<circle cx="887.6" cy="476.8" r="3.4" fill="#8d9bc0" clip-path="url(#c8p)"/>
<text x="887.6" y="462.4" font-size="9.7" font-weight="700" fill="#111" text-anchor="middle" textLength="10.6" lengthAdjust="spacingAndGlyphs" stroke="#111" stroke-width="0.3">50</text>
<text x="887.6" y="601.3" font-size="8" font-weight="700" fill="#111" text-anchor="middle" >May</text>
<circle cx="921.3" cy="504.0" r="3.4" fill="#8d9bc0" clip-path="url(#c8p)"/>
<text x="921.3" y="489.6" font-size="9.7" font-weight="700" fill="#111" text-anchor="middle" textLength="10.6" lengthAdjust="spacingAndGlyphs" stroke="#111" stroke-width="0.3">38</text>
<text x="921.3" y="601.3" font-size="8" font-weight="700" fill="#111" text-anchor="middle" >Mar</text>
<circle cx="955.0" cy="479.0" r="3.4" fill="#8d9bc0" clip-path="url(#c8p)"/>
<text x="955.0" y="464.6" font-size="9.7" font-weight="700" fill="#111" text-anchor="middle" textLength="10.6" lengthAdjust="spacingAndGlyphs" stroke="#111" stroke-width="0.3">49</text>
<text x="955.0" y="601.3" font-size="8" font-weight="700" fill="#111" text-anchor="middle" >Jan</text>
<circle cx="988.6" cy="463.1" r="3.4" fill="#8d9bc0" clip-path="url(#c8p)"/>
<text x="988.6" y="601.3" font-size="8" font-weight="700" fill="#111" text-anchor="middle" >Jul</text>
<circle cx="1022.3" cy="485.8" r="3.4" fill="#8d9bc0" clip-path="url(#c8p)"/>
<text x="1022.3" y="471.4" font-size="9.7" font-weight="700" fill="#111" text-anchor="middle" textLength="10.6" lengthAdjust="spacingAndGlyphs" stroke="#111" stroke-width="0.3">46</text>
<text x="1022.3" y="601.3" font-size="8" font-weight="700" fill="#111" text-anchor="middle" >Oct</text>
<circle cx="1056.0" cy="474.5" r="3.4" fill="#8d9bc0" clip-path="url(#c8p)"/>
<text x="1056.0" y="601.3" font-size="8" font-weight="700" fill="#111" text-anchor="middle" >Sep</text>
<circle cx="1089.6" cy="547.2" r="3.4" fill="#8d9bc0" clip-path="url(#c8p)"/>
<text x="1089.6" y="532.8" font-size="9.7" font-weight="700" fill="#111" text-anchor="middle" textLength="10.6" lengthAdjust="spacingAndGlyphs" stroke="#111" stroke-width="0.3">19</text>
<text x="1089.6" y="601.3" font-size="8" font-weight="700" fill="#111" text-anchor="middle" >Dec</text>
<circle cx="1123.3" cy="488.1" r="3.4" fill="#8d9bc0" clip-path="url(#c8p)"/>
<text x="1123.3" y="473.7" font-size="9.7" font-weight="700" fill="#111" text-anchor="middle" textLength="10.6" lengthAdjust="spacingAndGlyphs" stroke="#111" stroke-width="0.3">45</text>
<text x="1123.3" y="601.3" font-size="8" font-weight="700" fill="#111" text-anchor="middle" >Feb</text>
<circle cx="1157.0" cy="549.5" r="3.4" fill="#8d9bc0" clip-path="url(#c8p)"/>
<text x="1157.0" y="535.1" font-size="9.7" font-weight="700" fill="#111" text-anchor="middle" textLength="10.6" lengthAdjust="spacingAndGlyphs" stroke="#111" stroke-width="0.3">18</text>
<text x="1157.0" y="601.3" font-size="8" font-weight="700" fill="#111" text-anchor="middle" >Nov</text>
<circle cx="1190.6" cy="517.7" r="3.4" fill="#8d9bc0" clip-path="url(#c8p)"/>
<text x="1190.6" y="503.3" font-size="9.7" font-weight="700" fill="#111" text-anchor="middle" textLength="10.6" lengthAdjust="spacingAndGlyphs" stroke="#111" stroke-width="0.3">32</text>
<text x="1190.6" y="601.3" font-size="8" font-weight="700" fill="#111" text-anchor="middle" >Jun</text>
<text x="766.0" y="593.3" font-size="8" font-weight="700" fill="#111" text-anchor="end" >0</text>
<text x="766.0" y="547.8" font-size="8" font-weight="700" fill="#111" text-anchor="end" >20</text>
<text x="766.0" y="502.4" font-size="8" font-weight="700" fill="#111" text-anchor="end" >40</text>
<text x="766.0" y="456.9" font-size="8" font-weight="700" fill="#111" text-anchor="end" >60</text>
<rect x="8" y="615" width="911.5" height="9" rx="4" fill="#dadbde"/>
<rect x="0" y="134" width="2" height="480" fill="#f8f8f8"/>
</svg>
</body></html>
